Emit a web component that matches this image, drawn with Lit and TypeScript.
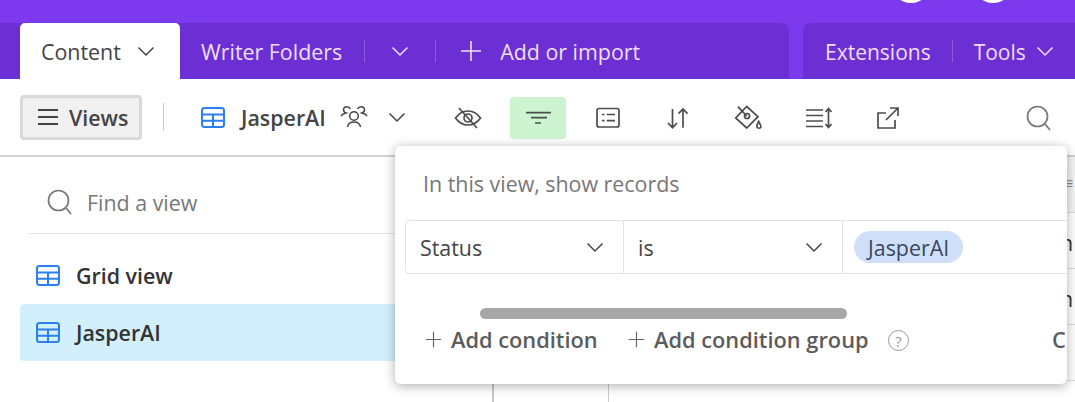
import { LitElement, html, css, svg } from "lit";
import { customElement } from "lit/decorators.js";

const chev = (w = 18) => html`<svg width="${w}" height="${w}" viewBox="0 0 18 18" fill="none" stroke="currentColor" stroke-width="1.5"><path d="M1.500 5.500 9 13 16.500 5.500"/></svg>`;
const grid = () => html`<svg width="26" height="23" viewBox="0 0 26 23" fill="none" stroke="#2d7ff0" stroke-width="2"><rect x="2" y="2" width="22" height="19" rx="2.500"/><path d="M2 8.500H24M2 14.800H24M13 8.500V21"/></svg>`;
const search = (s = 26) => html`<svg width="${s}" height="${s}" viewBox="0 0 26 26" fill="none" stroke="currentColor" stroke-width="1.700"><circle cx="11.500" cy="11.500" r="10"/><path d="M19 19 24 25"/></svg>`;
const plus = (s = 22, w = 1.6) => html`<svg width="${s}" height="${s}" viewBox="0 0 22 22" fill="none" stroke="currentColor" stroke-width="${w}"><path d="M11 1V21M1 11H21"/></svg>`;
const icons = {
  eye: svg`<path d="M1.500 13C5 8 9.500 6 14 6S23 8 26.500 13C23 18 18.500 20 14 20S5 18 1.500 13Z"/><circle cx="14" cy="13" r="4"/><path d="M5 3 23 23"/>`,
  filter: svg`<path d="M2 7.700H27M7 12.700H23M11 18H17"/>`,
  form: svg`<rect x="3" y="3.500" width="22" height="18.500" rx="2"/><path d="M8 9.500H10.500M8 15.700H10.500M12.700 9.500H21M12.700 15.700H21"/>`,
  sort: svg`<path d="M8.500 4V22.700M4 18 8.500 22.700 13 18M19 22.700V4M14.500 8.700 19 4 23.500 8.700"/>`,
  fill: svg`<path d="M12.700 1.500 24 11.700 12.700 23 1.700 13Z"/><path d="M4 1.700 12.700 11"/><circle cx="13" cy="11" r="2.500"/><path d="M24.700 16.500C23 19.500 22.300 20.500 23 22S26.500 23.500 27 22C27 20.500 26 19 24.700 16.500Z"/>`,
  height: svg`<path d="M2 5H19M2 10.500H19M2 16H19M2 21.500H19M24.500 4V22M21.500 7 24.500 3.500 27.500 7M21.500 19 24.500 22.500 27.500 19"/>`,
  share: svg`<path d="M12 8H4V23H21V15M12 15 24 3M16 3H24V11"/>`,
};
const tool = (k: keyof typeof icons, cls = "") => html`<span class="tool ${cls}"><svg width="28" height="26" viewBox="0 0 28 26" fill="none" stroke="currentColor" stroke-width="1.700">${icons[k]}</svg></span>`;

@customElement("app-root")
export class AppRoot extends LitElement {
  static styles = css`
    :host { display: block; width: 1075px; height: 402px; overflow: hidden; position: relative; background: #fff;
      font-family: "Open Sans", "Noto Sans", sans-serif; font-size: 21.4px; color: #444; }
    .top { height: 79px; background: #7c39ed; box-sizing: border-box; position: relative; }
    .dot { position: absolute; top: -37px; width: 40px; height: 40px; border-radius: 50%; background: #fff; }
    .dot.a { left: 891px; } .dot.b { left: 973px; }
    .tabs { position: absolute; left: 0; right: 0; top: 23px; bottom: 0; display: flex; }
    .tabs span { padding-top: 1px; }
    .left { width: 789px; background: #6b2fd3; border-top-right-radius: 8px; display: flex; align-items: center; padding-left: 20px; box-sizing: border-box; color: #f0dffb; }
    .right { margin-left: 14px; flex: 1; background: #6b2fd3; border-top-left-radius: 8px; display: flex; align-items: center; color: #f0dffb; padding-left: 22px; font-size: 21px; }
    .active { width: 160px; height: 56px; background: #fff; border-radius: 5px 5px 0 0; color: #444; display: flex; align-items: center; padding-left: 21px; box-sizing: border-box; gap: 16px; margin-right: 21px; }
    .tabs .sep { width: 1px; height: 22px; background: #8b5bdc; padding: 0; }
    .bar { height: 78px; box-sizing: border-box; border-bottom: 2px solid #d3d3d3; display: flex; align-items: center; padding-left: 20px; color: #444; }
    .views { width: 122px; height: 45px; box-sizing: border-box; background: #f1f1f1; border: 3px solid #d9d9d9; border-radius: 4px; display: flex; align-items: center; padding-left: 15px; gap: 11px; font-weight: 600; margin-right: 21px; }
    .bsep { width: 1px; height: 28px; background: #ccc; margin-right: 36px; }
    .vname { font-weight: 600; margin: 0 14px 0 15px; }
    .tools { display: flex; gap: 14px; position: absolute; left: 440px; top: 97px; }
    .tool { width: 56px; height: 42px; display: flex; align-items: center; justify-content: center; border-radius: 4px; color: #4c4c4c; }
    .tool.on { background: #cdf4d0; }
    .glass { position: absolute; left: 1026px; top: 105px; color: #777; }
    .side { position: absolute; left: 20px; top: 157px; width: 472px; height: 245px; border-right: 2px solid #c8c8c8; }
    .find { margin-left: 8px; width: 440px; height: 77px; border-bottom: 1px solid #e4e4e4; display: flex; align-items: center; gap: 14px; padding: 14px 0 0 19px; box-sizing: border-box; color: #777; }
    .row { height: 57px; display: flex; align-items: center; gap: 15px; padding-left: 15px; font-weight: 600; color: #333; border-radius: 4px; }
    .row.sel { background: #d2f0fc; }
    .list { padding-top: 13px; }
    .rest { position: absolute; left: 608px; top: 157px; width: 1px; height: 245px; background: #ccc; }
    .edge { position: absolute; left: 1040px; top: 157px; width: 35px; height: 245px; overflow: hidden; color: #333; text-align: right; }
    .edge div { height: 55px; border-bottom: 1px solid #ddd; line-height: 60px; padding-right: 2px; }
    .edge .head { color: #888; background: #f5f5f5; line-height: 52px; font-size: 16px; }
    .pop { position: absolute; left: 395px; top: 146px; width: 672px; height: 238px; background: #fff; border-radius: 6px; box-shadow: 0 2px 12px rgba(0,0,0,.32); overflow: hidden; }
    .ttl { position: absolute; left: 28px; top: 23px; color: #777; }
    .cond { position: absolute; left: 10px; top: 74px; width: 680px; height: 54px; box-sizing: border-box; border: 1px solid #e3e3e3; border-radius: 4px; display: flex; color: #444; }
    .cell { display: flex; align-items: center; justify-content: space-between; box-sizing: border-box; border-right: 1px solid #e3e3e3; padding: 0 19px 0 14px; }
    .pill { background: #cfdff9; border-radius: 16px; height: 32px; padding: 0 14px; display: flex; align-items: center; color: #3a4660; margin-left: 11px; }
    .thumb { position: absolute; left: 85px; top: 162px; width: 367px; height: 11px; border-radius: 6px; background: #a7a7a7; }
    .add { position: absolute; top: 179px; display: flex; align-items: center; gap: 9px; font-weight: 600; font-size: 21.8px; color: #5c5c5c; }
    .add svg { color: #666; }
    .q { position: absolute; left: 493px; top: 184px; width: 21px; height: 21px; border: 1.500px solid #999; border-radius: 50%; display: flex; align-items: center; justify-content: center; font-size: 15px; color: #999; box-sizing: border-box; }
    .c { position: absolute; left: 657px; top: 179px; font-weight: 600; font-size: 21.8px; color: #5c5c5c; }
  `;
  render() {
    return html`
      <div class="top">
        <span class="dot a"></span><span class="dot b"></span>
        <div class="tabs">
          <div class="left">
            <div class="active"><span>Content</span>${chev()}</div>
            <span>Writer Folders</span>
            <span class="sep" style="margin:0 26px 0 22px"></span>${chev()}
            <span class="sep" style="margin:0 24px 0 26px"></span>${plus()}
            <span style="margin-left:18px">Add or import</span>
          </div>
          <div class="right">
            <span>Extensions</span><span class="sep" style="margin:0 21px"></span><span>Tools</span>
            <span style="margin-left:10px;display:flex;padding:0">${chev()}</span>
          </div>
        </div>
      </div>
      <div class="bar">
        <div class="views">
          <svg width="20" height="16" viewBox="0 0 20 16" stroke="#444" stroke-width="2"><path d="M0 1H20M0 8H20M0 15H20"/></svg>
          <span>Views</span>
        </div>
        <span class="bsep"></span>
        ${grid()}
        <span class="vname">JasperAI</span>
        <svg width="28" height="26" viewBox="0 0 28 26" fill="none" stroke="#444" stroke-width="1.500"><circle cx="14" cy="12" r="4.300"/><path d="M7.500 23C8 19.500 10.500 18 14 18S20 19.500 20.500 23M10.500 5C9 2 4 1.500 3.500 5.500C3.500 7 4.500 8.500 6 9C4 9.500 2 10.500 1 12M17.500 5C19 2 24 1.500 24.500 5.500C24.500 7 23.500 8.500 22 9C24 9.500 26 10.500 27 12"/></svg>
        <span style="margin-left:20px;display:flex">${chev()}</span>
      </div>
      <div class="tools">
        ${tool("eye")}${tool("filter", "on")}${tool("form")}${tool("sort")}${tool("fill")}${tool("height")}${tool("share")}
      </div>
      <div class="glass">${search()}</div>
      <div class="side">
        <div class="find">${search()}<span>Find a view</span></div>
        <div class="list">
          <div class="row">${grid()}<span>Grid view</span></div>
          <div class="row sel">${grid()}<span>JasperAI</span></div>
        </div>
      </div>
      <div class="rest"></div>
      <div class="edge">
        <div class="head">≡</div>
        <div>n</div>
        <div>n</div>
        <div></div>
      </div>
      <div class="pop">
        <div class="ttl">In this view, show records</div>
        <div class="cond">
          <div class="cell" style="width:218px"><span>Status</span>${chev()}</div>
          <div class="cell" style="width:219px"><span>is</span>${chev()}</div>
          <div style="display:flex;align-items:center"><span class="pill">JasperAI</span></div>
        </div>
        <div class="thumb"></div>
        <div class="add" style="left:30px">${plus(17, 1.500)}<span>Add condition</span></div>
        <div class="add" style="left:233px">${plus(17, 1.500)}<span>Add condition group</span></div>
        <div class="q">?</div>
        <div class="c">C</div>
      </div>
    `;
  }
}
